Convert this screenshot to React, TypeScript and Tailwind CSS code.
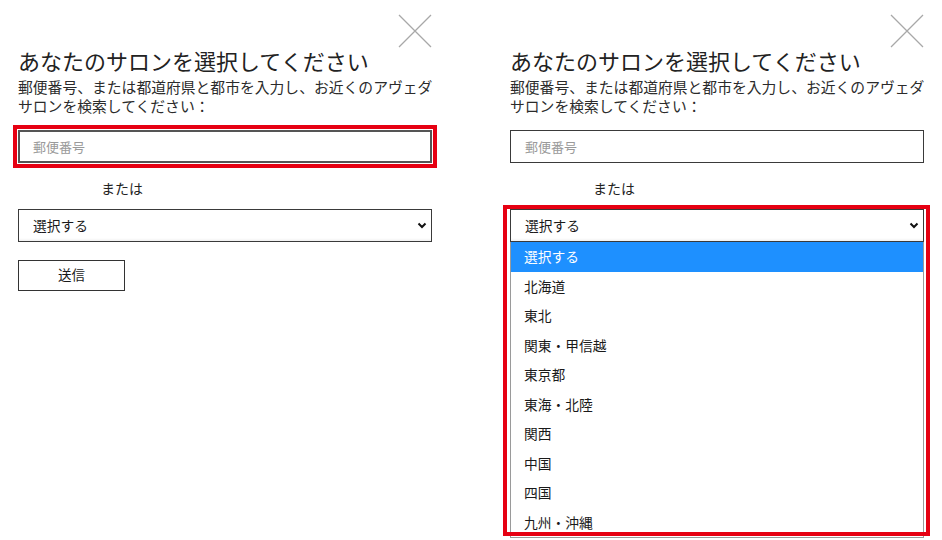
import React from 'react';

const regions = ['選択する', '北海道', '東北', '関東・甲信越', '東京都', '東海・北陸', '関西', '中国', '四国', '九州・沖縄'];

function CloseIcon() {
  return (
    <svg width="34" height="34" viewBox="0 0 34 34" className="block">
      <path d="M1 1 L33 33 M33 1 L1 33" stroke="#a8a8a8" strokeWidth="1.3" fill="none" />
    </svg>
  );
}

function Chevron() {
  return (
    <svg width="10" height="7" viewBox="0 0 10 7" className="block">
      <path d="M1.5 1.5 L5 5 L8.5 1.5" stroke="#111" strokeWidth="2" fill="none" />
    </svg>
  );
}

function Panel({ open }: { open: boolean }) {
  return (
    <div className="w-[492px] shrink-0 pl-[18px] pt-[14px]">
      <div className="w-[414px]">
        {/* close */}
        <div className="flex justify-end">
          <CloseIcon />
        </div>

        <h2 className="mt-[-2px] text-[22px] leading-[28px] font-normal text-[#222]">
          あなたのサロンを選択してください
        </h2>
        <p className="mt-[3px] whitespace-nowrap text-[14.8px] leading-[19px] text-[#2b2b2b]">
          郵便番号、または都道府県と都市を入力し、お近くのアヴェダ
          <br />
          サロンを検索してください：
        </p>

        {/* postal code */}
        <div
          className={
            open
              ? 'mt-[15px] flex h-[33px] items-center border border-[#3a3a3a] px-[14px]'
              : 'mt-[15px] flex h-[33px] items-center border-2 border-[#555] px-[13px] outline-4 outline-offset-1 outline-[#e60012]'
          }
        >
          <span className="text-[13px] text-[#9a9a9a]">郵便番号</span>
        </div>

        <div className="mt-[15px] ml-[83px] text-[14px] leading-[20px] text-[#222]">または</div>

        {/* region select */}
        <div className="relative mt-[11px]">
          <div className="flex h-[33px] items-center justify-between border border-[#3a3a3a] bg-white pl-[14px] pr-[4px] shadow-[inset_0_-3px_3px_-2px_rgba(0,0,0,0.08)]">
            <span className="mt-[-1px] text-[13.75px] text-[#1a1a1a]">選択する</span>
            <Chevron />
          </div>

          {open && (
            <>
              <ul className="border-x border-b border-[#9a9a9a] bg-white">
                {regions.map((r, i) => (
                  <li
                    key={r}
                    className={
                      i === 0
                        ? 'flex h-[29.5px] items-center bg-[#1e90ff] pl-[13px] text-[13.75px] text-white'
                        : 'flex h-[29.5px] items-center pl-[13px] text-[13.75px] text-[#1a1a1a]'
                    }
                  >
                    {r}
                  </li>
                ))}
              </ul>
              {/* highlight frame */}
              <div className="pointer-events-none absolute left-[-7px] right-[-6px] top-[-4px] h-[331px] border-4 border-[#e60012]" />
            </>
          )}
        </div>

        {!open && (
          <button className="mt-[18px] flex h-[31px] w-[107px] items-center justify-center border border-[#333] bg-white pb-[2px] text-[13.5px] text-[#1a1a1a]">
            送信
          </button>
        )}
      </div>
    </div>
  );
}

export default function App() {
  return (
    <div
      className="flex h-[540px] w-[942px] overflow-hidden bg-white"
      style={{ fontFamily: '"Noto Sans CJK JP", "Noto Sans", sans-serif' }}
    >
      <Panel open={false} />
      <Panel open={true} />
    </div>
  );
}
